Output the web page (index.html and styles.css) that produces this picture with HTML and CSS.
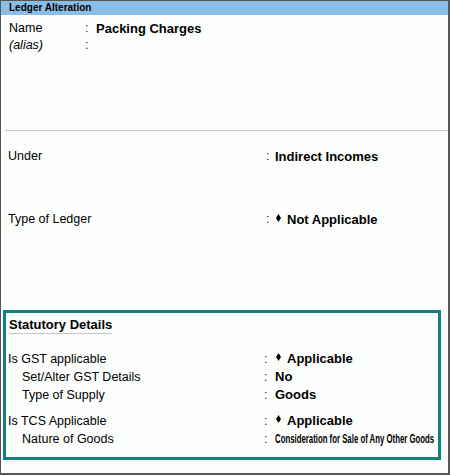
FILE: index.html
```html
<!DOCTYPE html>
<html>
<head>
<meta charset="utf-8">
<link rel="stylesheet" href="styles.css">
</head>
<body>
<div class="window">
  <div class="titlebar">Ledger Alteration</div>
  <div class="name-block">
    <div class="row name-row">
      <span class="label">Name</span><span class="colon">:</span><span class="value">Packing Charges</span>
    </div>
    <div class="row name-row">
      <span class="label alias">(alias)</span><span class="colon">:</span><span class="value"></span>
    </div>
  </div>
  <div class="separator"></div>
  <div class="row main-row under">
    <span class="label">Under</span><span class="colon">:</span><span class="value">Indirect Incomes</span>
  </div>
  <div class="row main-row type">
    <span class="label">Type of Ledger</span><span class="colon">:</span><span class="value"><span class="dia"></span>Not Applicable</span>
  </div>
  <div class="statutory">
    <div class="stat-title"><span>Statutory Details</span></div>
    <div class="row box-row first">
      <span class="label">Is GST applicable</span><span class="colon">:</span><span class="value"><span class="dia"></span>Applicable</span>
    </div>
    <div class="row box-row">
      <span class="label sub">Set/Alter GST Details</span><span class="colon">:</span><span class="value">No</span>
    </div>
    <div class="row box-row">
      <span class="label sub">Type of Supply</span><span class="colon">:</span><span class="value">Goods</span>
    </div>
    <div class="row box-row group">
      <span class="label">Is TCS Applicable</span><span class="colon">:</span><span class="value"><span class="dia"></span>Applicable</span>
    </div>
    <div class="row box-row last">
      <span class="label sub">Nature of Goods</span><span class="colon">:</span><span class="value"><span class="narrow">Consideration for Sale of Any Other Goods</span></span>
    </div>
  </div>
</div>
</body>
</html>
```
FILE: styles.css
```css
* { box-sizing: border-box; }
html, body { margin: 0; padding: 0; background: #fcfefc; }
body { font-family: "Liberation Sans", Arial, sans-serif; color: #000; }

.window {
  width: 450px;
  height: 475px;
  border-top: 1px solid #555;
  border-left: 1px solid #555;
  border-right: 2px solid #555;
  border-bottom: 2px solid #555;
  background: #fcfefc;
  overflow: hidden;
}

.titlebar {
  height: 14px;
  background: #8bbee6;
  font-weight: bold;
  font-size: 10px;
  line-height: 14px;
  padding-left: 8px;
}

.name-block {
  height: 115px;
  padding-top: 5px;
}

.row {
  display: grid;
  line-height: 17px;
  height: 17px;
  white-space: nowrap;
}

.label { font-size: 12.5px; }
.alias { font-style: italic; }
.colon { font-size: 12.5px; color: #222; }
.value { font-size: 13px; font-weight: bold; }

.name-row {
  grid-template-columns: 76px 11px 1fr;
  padding-left: 8px;
}

.separator {
  height: 1px;
  margin-left: 4px;
  background: #c4c4cc;
}

.main-row {
  grid-template-columns: 258px 9px 1fr;
  padding-left: 7px;
}
.under { margin-top: 17px; }
.type { margin-top: 46px; }

.statutory {
  margin: 82px 0 0 2px;
  width: 438px;
  border: 3px solid #0f8282;
  padding: 4px 0 9px 2px;
}

.stat-title {
  height: 17px;
  line-height: 16px;
  font-size: 13px;
  font-weight: bold;
  padding-left: 1px;
  margin-bottom: 16px;
}
.stat-title span {
  display: inline-block;
  border-bottom: 1px solid #c4c4d4;
}

.box-row {
  grid-template-columns: 256px 11px 1fr;
  line-height: 18px;
  height: 18px;
}
.box-row.group { margin-top: 8px; }

.sub { padding-left: 14px; }

.dia {
  display: inline-block;
  width: 5px;
  height: 8px;
  background: #000;
  clip-path: polygon(50% 0, 100% 50%, 50% 100%, 0 50%);
  margin-right: 6px;
  margin-left: 1px;
  vertical-align: 2px;
}

.narrow {
  display: inline-block;
  font-size: 12px;
  transform: scaleX(0.65);
  transform-origin: left center;
}
```
